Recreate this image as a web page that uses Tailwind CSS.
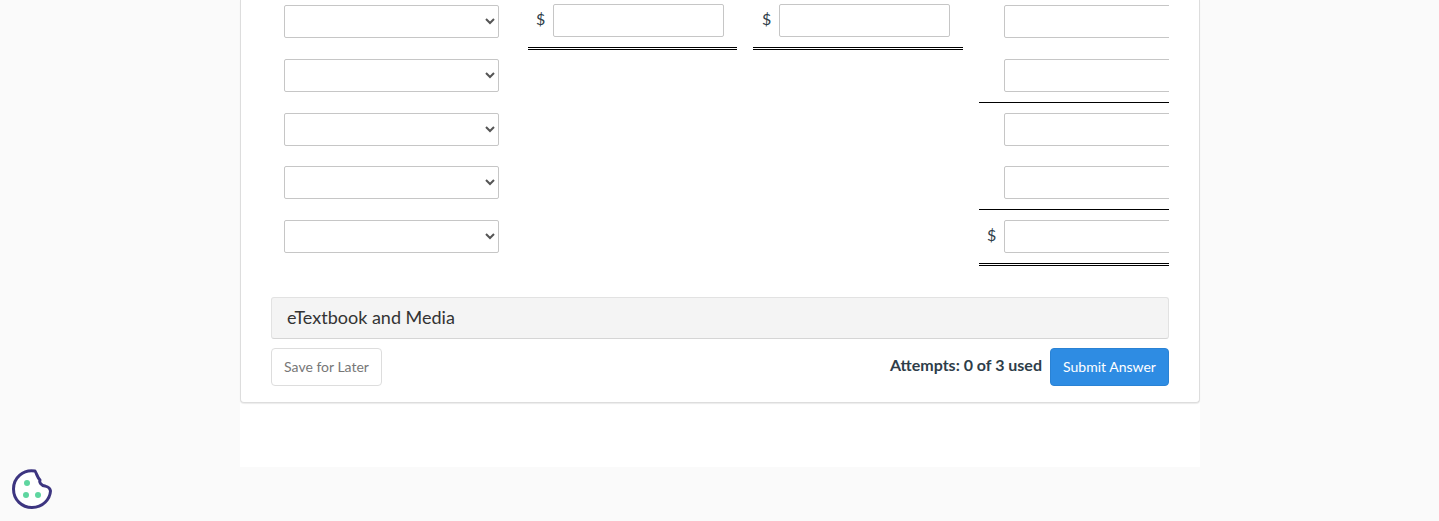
<!DOCTYPE html>
<html lang="en">
<head>
  <meta charset="UTF-8" />
  <meta name="viewport" content="width=device-width, initial-scale=1.0" />
  <title>Question</title>
  <script src="https://cdn.jsdelivr.net/npm/@tailwindcss/browser@4"></script>
</head>
<body class="bg-[#fafafa] h-[521px] overflow-hidden font-['Lato',sans-serif] text-[#2e3d49] antialiased">
  <div class="w-[960px] ml-[240px] h-[467px] bg-white">
    <div class="h-[403px] bg-white border border-t-0 border-[#ddd] rounded-b-[4px] shadow-[0_1px_1px_rgba(0,0,0,0.08)] pl-[30px] pr-[30px]">

      <div class="grid grid-cols-[241px_209px_210px_190px] gap-x-4 grid-rows-[54px_54px_53px_54px_70px]">
        <!-- row 1 -->
        <div class="pl-[13px] pt-[5px]">
          <select class="block w-[215px] h-[33px] bg-white text-[#555] border border-[#c6c6c6] rounded-[2px]"></select>
        </div>
        <div class="h-[50px] pt-[4px] border-b-[3px] border-double border-black flex items-start">
          <span class="w-[25px] pl-[8px] text-[16px] leading-[30px]">$</span>
          <input type="text" class="w-[171px] h-[33px] bg-white border border-[#c6c6c6] rounded-[2px]" />
        </div>
        <div class="h-[50px] pt-[4px] border-b-[3px] border-double border-black flex items-start">
          <span class="w-[26px] pl-[9px] text-[16px] leading-[30px]">$</span>
          <input type="text" class="w-[171px] h-[33px] bg-white border border-[#c6c6c6] rounded-[2px]" />
        </div>
        <div class="pl-[25px] pt-[5px] overflow-hidden">
          <input type="text" class="block w-[190px] h-[33px] bg-white border border-[#c6c6c6] rounded-[2px]" />
        </div>

        <!-- row 2 -->
        <div class="pl-[13px] pt-[5px]">
          <select class="block w-[215px] h-[33px] bg-white text-[#555] border border-[#c6c6c6] rounded-[2px]"></select>
        </div>
        <div></div>
        <div></div>
        <div class="h-[49px] pl-[25px] pt-[5px] overflow-hidden border-b border-black">
          <input type="text" class="block w-[190px] h-[33px] bg-white border border-[#c6c6c6] rounded-[2px]" />
        </div>

        <!-- row 3 -->
        <div class="pl-[13px] pt-[5px]">
          <select class="block w-[215px] h-[33px] bg-white text-[#555] border border-[#c6c6c6] rounded-[2px]"></select>
        </div>
        <div></div>
        <div></div>
        <div class="pl-[25px] pt-[5px] overflow-hidden">
          <input type="text" class="block w-[190px] h-[33px] bg-white border border-[#c6c6c6] rounded-[2px]" />
        </div>

        <!-- row 4 -->
        <div class="pl-[13px] pt-[5px]">
          <select class="block w-[215px] h-[33px] bg-white text-[#555] border border-[#c6c6c6] rounded-[2px]"></select>
        </div>
        <div></div>
        <div></div>
        <div class="h-[49px] pl-[25px] pt-[5px] overflow-hidden border-b border-black">
          <input type="text" class="block w-[190px] h-[33px] bg-white border border-[#c6c6c6] rounded-[2px]" />
        </div>

        <!-- row 5 -->
        <div class="pl-[13px] pt-[5px]">
          <select class="block w-[215px] h-[33px] bg-white text-[#555] border border-[#c6c6c6] rounded-[2px]"></select>
        </div>
        <div></div>
        <div></div>
        <div class="h-[51px] pt-[5px] overflow-hidden border-b-[3px] border-double border-black flex items-start">
          <span class="w-[25px] pl-[8px] shrink-0 text-[16px] leading-[30px]">$</span>
          <input type="text" class="shrink-0 w-[190px] h-[33px] bg-white border border-[#c6c6c6] rounded-[2px]" />
        </div>
      </div>

      <div class="mt-[12px] h-[42px] bg-[#f4f4f4] border border-[#e2e2e2] border-b-[#d5d5d5] rounded-[3px] pl-[15px] text-[18px] leading-[38px] text-[#333]">eTextbook and Media</div>

      <div class="mt-[9px] flex items-start justify-between">
        <button class="w-[111px] h-[38px] pb-[1px] bg-white border border-[#ddd] rounded-[4px] text-[14px] text-[#777]">Save for Later</button>
        <div class="flex items-start gap-[8px]">
          <span class="text-[16px] font-bold leading-[33px]">Attempts: 0 of 3 used</span>
          <button class="w-[119px] h-[38px] pb-[1px] bg-[#2e8ce3] border border-[#2a82d4] rounded-[4px] text-[14px] text-white">Submit Answer</button>
        </div>
      </div>
    </div>
  </div>

  <div class="absolute left-[12px] top-[469px] w-[40px] h-[40px]">
    <svg viewBox="0 0 40 40" width="40" height="40" fill="none">
      <path d="M23 2 C11 0 1.5 9 1.5 20 C1.5 31 10 38.5 20 38.5 C31 38.5 38 30 38.5 22 C38 18 35 17.5 33 17 C29 16.5 27 13 28 11 C25 8 25 5 23 2 Z" fill="#fff" stroke="#3d3580" stroke-width="3" stroke-linejoin="round" />
      <circle cx="15" cy="14" r="3" fill="#5fd6a0" />
      <circle cx="14" cy="26" r="3" fill="#5fd6a0" />
      <circle cx="26" cy="26" r="3" fill="#5fd6a0" />
    </svg>
  </div>
</body>
</html>
